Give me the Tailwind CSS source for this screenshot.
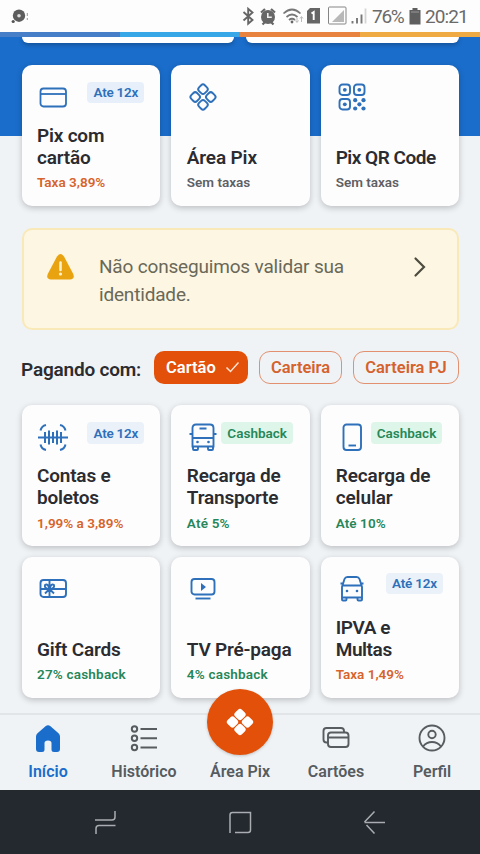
<!DOCTYPE html>
<html lang="pt-BR">
<head>
<meta charset="utf-8">
<title>Início</title>
<script src="https://cdn.jsdelivr.net/npm/@tailwindcss/browser@4"></script>
</head>
<body class="w-[480px] h-[854px] overflow-hidden bg-[#f0f3f6] font-['Roboto',sans-serif] text-[#2b2c31] flex flex-col">

<!-- Status bar -->
<header class="h-8 shrink-0 bg-[#fdfdfd] flex items-center text-[#6a6a6a] pl-2 pr-3">
  <svg class="w-6 h-6" viewBox="0 0 24 24"><circle cx="11" cy="11.700" r="6.200" fill="#5d5d5d"/><circle cx="11" cy="11.700" r="1.800" fill="#ddd"/><circle cx="5.200" cy="17.500" r="1.600" fill="#555"/><path d="M19.300 9v3M19.300 14v2" stroke="#999" stroke-width="1"/></svg>
  <div class="ml-auto flex items-center">
    <svg class="w-[130px] h-8" viewBox="240 0 130 32" fill="none">
      <path d="M242.500 12l9 8-4.300 3.700V8.800l4.300 3.700-9 8" stroke="#666" stroke-width="1.900"/>
      <circle cx="267" cy="17" r="7" fill="#666"/><path d="M260 12.500l4-3.500M274 12.500l-4-3.500M261.500 24.500l2.500-2.500M272.500 24.500l-2.500-2.500" stroke="#666" stroke-width="2.200"/><path d="M266.800 13v4.300h4" stroke="#eee" stroke-width="1.600"/>
      <path d="M282.500 13.500q8.500-8 17 0M285.500 17q5.500-5 11 0M288 20q3-2.500 6 0" stroke="#777" stroke-width="1.700"/><circle cx="291" cy="22" r="1.400" fill="#666"/><path d="M296 18v4m-1.500-1.500l1.500 2 1.500-2M300.500 22v-5m-1.500 1.500l1.500-2 1.500 2" stroke="#bbb" stroke-width="1"/>
      <path d="M309 8h10v15.500H306V11z" fill="#666"/><path d="M310.500 13.500l2.200-1.500v8" stroke="#fff" stroke-width="1.900"/>
      <rect x="327.500" y="7" width="17.500" height="17" rx="1" stroke="#858585"/><path d="M343 10v12h-12z" fill="#b8b8b8"/>
      <path d="M351.500 21v2.500M356 18v5.500M360.500 14.500v9" stroke="#777" stroke-width="1.900"/><path d="M364.500 8.500v15" stroke="#d5d5d5" stroke-width="1.800"/>
    </svg>
    <span class="w-[33px] ml-[1px] text-[19px] tracking-[-1.300px] leading-8 pt-[2px] whitespace-nowrap">76%</span>
    <svg class="w-3 h-[18px] ml-[4px]" viewBox="0 0 12 18"><path d="M3.500 1h5v2.500H3.500zM.5 3h11v14.500H.5z" fill="#5f5f5f"/><path d="M2 5h8" stroke="#999"/></svg>
    <span class="w-[43px] ml-[4px] text-[19px] tracking-[-0.900px] leading-8 pt-[2px] whitespace-nowrap">20:21</span>
  </div>
</header>

<div class="h-[5px] shrink-0 grid grid-cols-4">
  <span class="bg-[#467fc7]"></span><span class="bg-[#37a7e7]"></span><span class="bg-[#e8833f]"></span><span class="bg-[#efaa43]"></span>
</div>

<main class="h-[676px] shrink-0 overflow-hidden pl-[22px] pr-[21px] bg-[linear-gradient(#1a6dcb_0_99px,#f0f3f6_99px)]">
  <div class="flex gap-3">
    <div class="w-[212px] h-[6px] bg-white rounded-b-[10px] shadow-[0_2px_4px_rgba(0,0,0,0.25)]"></div>
    <div class="w-[213px] h-[6px] bg-white rounded-b-[10px] shadow-[0_2px_4px_rgba(0,0,0,0.25)]"></div>
  </div>

  <section class="mt-[22px] grid grid-cols-3 gap-[11px]">
    <article class="h-[141px] bg-[#fdfdfe] rounded-[10px] shadow-[0_2px_6px_rgba(0,0,0,0.22)] px-[15px] pt-4 pb-4 flex flex-col">
      <div class="flex justify-between items-start">
        <svg class="w-8 h-8" viewBox="0 0 32 32" fill="none" stroke="#2e70ba" stroke-width="1.800"><rect x="3.500" y="7.500" width="25.500" height="18" rx="3"/><path d="M3.500 13h25.500"/></svg>
        <span class="h-[21px] w-[57px] mr-px mt-px rounded bg-[#e7f0fa] text-center text-[#2e70ba] text-[13.500px] tracking-[-0.250px] font-semibold leading-[21px]">Ate 12x</span>
      </div>
      <h3 class="mt-auto text-[19px] leading-[22px] font-semibold tracking-[-0.200px]">Pix com<br>cartão</h3>
      <p class="mt-[5px] text-[13.500px] leading-4 font-semibold text-[#d7642b]">Taxa 3,89%</p>
    </article>
    <article class="h-[141px] bg-[#fdfdfe] rounded-[10px] shadow-[0_2px_6px_rgba(0,0,0,0.22)] px-[15.500px] pt-4 pb-4 flex flex-col">
      <svg class="w-8 h-8" viewBox="0 0 32 32" fill="none" stroke="#2e70ba" stroke-width="1.900"><g transform="rotate(45 16 16)"><rect x="6.400" y="6.400" width="8.200" height="8.200" rx="2.600"/><rect x="17.400" y="6.400" width="8.200" height="8.200" rx="2.600"/><rect x="6.400" y="17.400" width="8.200" height="8.200" rx="2.600"/><rect x="17.400" y="17.400" width="8.200" height="8.200" rx="2.600"/></g></svg>
      <h3 class="mt-auto text-[19px] leading-[22px] font-semibold tracking-[-0.150px]">Área Pix</h3>
      <p class="mt-[5px] text-[13.500px] leading-4 font-semibold text-[#5d6064]">Sem taxas</p>
    </article>
    <article class="h-[141px] bg-[#fdfdfe] rounded-[10px] shadow-[0_2px_6px_rgba(0,0,0,0.22)] px-[15px] pt-4 pb-4 flex flex-col">
      <svg class="w-8 h-8" viewBox="0 0 32 32" fill="none" stroke="#2e70ba" stroke-width="1.900"><rect x="3.500" y="3.500" width="10.500" height="10.500" rx="3"/><rect x="18" y="3.500" width="10.500" height="10.500" rx="3"/><rect x="3.500" y="18" width="10.500" height="10.500" rx="3"/><g fill="#2e70ba" stroke="none"><circle cx="8.800" cy="8.800" r="1.900"/><circle cx="23.300" cy="8.800" r="1.900"/><circle cx="8.800" cy="23.300" r="1.900"/><circle cx="19.200" cy="19.200" r="2.100"/><circle cx="27.500" cy="19.200" r="2.100"/><circle cx="23.400" cy="23.300" r="2.100"/><circle cx="19.200" cy="27.500" r="2.100"/><circle cx="27.500" cy="27.500" r="2.100"/></g></svg>
      <h3 class="mt-auto text-[19px] leading-[22px] font-semibold tracking-[-0.500px] whitespace-nowrap">Pix QR Code</h3>
      <p class="mt-[5px] text-[13.500px] leading-4 font-semibold text-[#5d6064]">Sem taxas</p>
    </article>
  </section>

  <section class="mt-[22px] h-[102px] rounded-[10px] border-2 border-[#fae9b8] bg-[#fcf6e2] flex items-start pl-[22px] pr-[28px] pt-[22px] text-[#6a6858]">
    <svg class="w-[29px] h-[28px] mt-[1px]" viewBox="0 0 29 28"><path d="M11 3.500q3.500-5 7 0l9 17q2.500 5.500-3 6H5q-5.500-.5-3-6z" fill="#eaa310"/><path d="M14.500 9.500v7.500" stroke="#fff3d0" stroke-width="2.500" stroke-linecap="round"/><circle cx="14.500" cy="21" r="1.600" fill="#fff3d0"/></svg>
    <p class="ml-[24px] mt-[1px] text-[19px] tracking-[-0.180px] leading-[27.500px] whitespace-nowrap">Não conseguimos validar sua<br>identidade.</p>
    <svg class="w-5 h-6 ml-auto mt-[2px]" viewBox="0 0 20 24" fill="none" stroke="#4d4c40" stroke-width="2.200" stroke-linecap="round"><path d="M6.500 4.500l8.500 8.500-8.500 8.500"/></svg>
  </section>

  <section class="mt-[21px] h-[33px] flex items-center">
    <h2 class="w-[132px] -ml-px mr-px pt-[6px] text-[19px] tracking-[-0.200px] font-semibold whitespace-nowrap">Pagando com:</h2>
    <span class="w-[94px] h-[33px] rounded-[10px] bg-[#e25009] text-white text-[16.500px] font-semibold leading-[33px] pl-3 ml-px flex shrink-0">Cartão<svg class="ml-[9px] mt-[9px] w-[14px] h-[14px]" viewBox="0 0 14 14" fill="none" stroke="#ffe4d5" stroke-width="1.500"><path d="M1.500 7.500l4 4 8-9"/></svg></span>
    <span class="ml-[11px] w-[83px] h-[33px] rounded-[11px] border border-[#e29170] text-[#d5622c] text-[16.500px] font-semibold leading-[31px] text-center shrink-0">Carteira</span>
    <span class="ml-[11px] w-[106px] h-[33px] rounded-[11px] border border-[#e29170] text-[#d5622c] text-[16.500px] font-semibold leading-[31px] text-center shrink-0">Carteira PJ</span>
  </section>

  <section class="mt-[21px] grid grid-cols-3 gap-[11px]">
    <article class="h-[141px] bg-[#fdfdfe] rounded-[10px] shadow-[0_2px_6px_rgba(0,0,0,0.22)] px-[15px] pt-4 pb-[15px] flex flex-col">
      <div class="flex justify-between items-start">
        <svg class="w-8 h-8" viewBox="0 0 32 32" fill="none" stroke="#2e70ba" stroke-width="2"><path d="M1 16.500h30M8 11v11M12 9.500v14M16 11v11M20 9.500v14M24 11v11"/><path d="M3.500 9.500q1-4.500 5.500-5.500M23 4q4.500 1 5.500 5.500M3.500 23.500q1 4.500 5.500 5.500M23 29q4.500-1 5.500-5.500"/></svg>
        <span class="h-[22px] w-[57px] mr-px mt-px rounded bg-[#ebf1f9] text-center text-[#2e70ba] text-[13.500px] tracking-[-0.250px] font-semibold leading-[22px]">Ate 12x</span>
      </div>
      <h3 class="mt-auto text-[19px] leading-[22px] font-semibold tracking-[-0.200px]">Contas e<br>boletos</h3>
      <p class="mt-[6px] text-[13.500px] leading-4 font-semibold text-[#d7642b] whitespace-nowrap">1,99% a 3,89%</p>
    </article>
    <article class="h-[141px] bg-[#fdfdfe] rounded-[10px] shadow-[0_2px_6px_rgba(0,0,0,0.22)] px-[15.500px] pt-4 pb-[15px] flex flex-col">
      <div class="flex justify-between items-start">
        <svg class="w-8 h-8" viewBox="0 0 32 32" fill="none" stroke="#2e70ba" stroke-width="1.900"><path d="M5.500 7q0-3.500 3.500-3.500h14q3.500 0 3.500 3.500v18.500h-21zM5.500 17h21M6 25v3q0 1 1 1h3q1 0 1-1v-2.500M21 25.500V28q0 1 1 1h3q1 0 1-1v-3M12.500 7.500h7M2.500 13h3M26.500 13h3"/><g fill="#2e70ba" stroke="none"><circle cx="10.500" cy="21" r="1.300"/><circle cx="21.500" cy="21" r="1.300"/></g></svg>
        <span class="h-[22px] w-[72px] mr-px mt-px rounded bg-[#def6ea] text-center text-[#268758] text-[13.500px] font-semibold leading-[22px]">Cashback</span>
      </div>
      <h3 class="mt-auto text-[19px] leading-[22px] font-semibold tracking-[-0.200px]">Recarga de<br>Transporte</h3>
      <p class="mt-[6px] text-[13.500px] leading-4 font-semibold tracking-[0.200px] text-[#268758]">Até 5%</p>
    </article>
    <article class="h-[141px] bg-[#fdfdfe] rounded-[10px] shadow-[0_2px_6px_rgba(0,0,0,0.22)] px-[15px] pt-4 pb-[15px] flex flex-col">
      <div class="flex justify-between items-start">
        <svg class="w-8 h-8" viewBox="0 0 32 32" fill="none" stroke="#2e70ba" stroke-width="1.900"><rect x="7.500" y="3.500" width="17.500" height="25.500" rx="3"/><path d="M12.500 24.500h7.500"/></svg>
        <span class="h-[22px] w-[71px] mr-[2px] mt-px rounded bg-[#def6ea] text-center text-[#268758] text-[13.500px] font-semibold leading-[22px]">Cashback</span>
      </div>
      <h3 class="mt-auto text-[19px] leading-[22px] font-semibold tracking-[-0.100px]">Recarga de<br>celular</h3>
      <p class="mt-[6px] text-[13.500px] leading-4 font-semibold tracking-[0.100px] text-[#268758]">Até 10%</p>
    </article>

    <article class="h-[141px] bg-[#fdfdfe] rounded-[10px] shadow-[0_2px_6px_rgba(0,0,0,0.22)] px-[15px] pt-[15px] pb-4 flex flex-col">
      <svg class="w-8 h-8" viewBox="0 0 32 32" fill="none" stroke="#2e70ba" stroke-width="1.900"><rect x="3.500" y="8" width="25.500" height="17" rx="3"/><path d="M3.500 17h25.500M12.500 8v17M12.500 17q-5.500-.5-4.500-4 3-2 4.500 4 1.500-6 4.500-4 1 3.500-4.500 4l-4.500 4.500M12.500 17l4.500 4.500"/></svg>
      <h3 class="mt-auto text-[19px] leading-[22px] font-semibold tracking-[-0.200px]">Gift Cards</h3>
      <p class="mt-[5px] text-[13.500px] leading-4 font-semibold tracking-[0.200px] text-[#268758] whitespace-nowrap">27% cashback</p>
    </article>
    <article class="h-[141px] bg-[#fdfdfe] rounded-[10px] shadow-[0_2px_6px_rgba(0,0,0,0.22)] px-[15.500px] pt-[15px] pb-4 flex flex-col">
      <svg class="w-8 h-8" viewBox="0 0 32 32" fill="none" stroke="#2e70ba" stroke-width="1.900"><rect x="4.500" y="7" width="23" height="15.500" rx="3"/><path d="M8.500 26.500h15"/><path d="M14 11v8l5-4z" fill="#2e70ba" stroke="none"/></svg>
      <h3 class="mt-auto text-[19px] leading-[22px] font-semibold tracking-[-0.200px] whitespace-nowrap">TV Pré-paga</h3>
      <p class="mt-[5px] text-[13.500px] leading-4 font-semibold tracking-[0.200px] text-[#268758] whitespace-nowrap">4% cashback</p>
    </article>
    <article class="h-[141px] bg-[#fdfdfe] rounded-[10px] shadow-[0_2px_6px_rgba(0,0,0,0.22)] px-[15px] pt-[15px] pb-4 flex flex-col">
      <div class="flex justify-between items-start">
        <svg class="w-8 h-8" viewBox="0 0 32 32" fill="none" stroke="#2e70ba" stroke-width="1.900"><path d="M6 25.500V15l2.500-8q.8-2 3-2h9q2.200 0 3 2l2.500 8v10.500zM6 13.500h20M6 25v2.500q0 1 1 1h2.500q1 0 1-1V25M21.500 25v2.500q0 1 1 1H25q1 0 1-1V25M4.500 11.500H7M25 11.500h2.500"/><g fill="#2e70ba" stroke="none"><circle cx="11" cy="19" r="1.300"/><circle cx="21" cy="19" r="1.300"/></g></svg>
        <span class="h-[21px] w-[57px] mr-px mt-px rounded bg-[#ebf1f9] text-center text-[#2e70ba] text-[13.500px] tracking-[-0.200px] font-semibold leading-[21px]">Até 12x</span>
      </div>
      <h3 class="mt-auto text-[19px] leading-[22px] font-semibold tracking-[-0.400px]">IPVA e<br>Multas</h3>
      <p class="mt-[5px] text-[13.500px] leading-4 font-semibold text-[#d7642b]">Taxa 1,49%</p>
    </article>
  </section>
</main>

<!-- Tab bar -->
<nav class="relative h-[77px] shrink-0 border-t-2 border-[#e2e5e8] bg-[#f0f3f6] grid grid-cols-5 text-[#565c5f] text-[16px] font-semibold text-center">
  <a class="flex flex-col items-center pt-[7px] text-[#1b6dcb]"><svg class="w-8 h-8" viewBox="0 0 32 32"><path d="M4 14.500q0-2 1.500-3.300l8-7q2.500-2 5 0l8 7Q28 12.500 28 14.500V27q0 3-3 3h-3q-2.500 0-2.500-2.500V21q0-2.500-3.500-2.500T12.500 21v6.500Q12.500 30 10 30H7q-3 0-3-3z" fill="#1b6dcb"/></svg><span class="leading-5 mt-[8px]">Início</span></a>
  <a class="flex flex-col items-center pt-[7px]"><svg class="w-8 h-8" viewBox="0 0 32 32" fill="none" stroke="#565c5f" stroke-width="2"><circle cx="6.500" cy="7" r="2.700"/><circle cx="6.500" cy="16.200" r="2.700"/><circle cx="6.500" cy="25.500" r="2.700"/><path d="M12.500 7H29M12.500 16.200H29M12.500 25.500H29"/></svg><span class="leading-5 mt-[8px]">Histórico</span></a>
  <a class="flex flex-col items-center pt-[47px]"><span class="leading-5 whitespace-nowrap">Área Pix</span></a>
  <a class="flex flex-col items-center pt-[7px]"><svg class="w-8 h-8" viewBox="0 0 32 32" fill="none" stroke="#565c5f" stroke-width="1.900"><rect x="8" y="10.500" width="20.500" height="14.500" rx="3"/><path d="M8 15.500h20.500M8 20.500H6.500q-3 0-3-3V9q0-3 3-3h14.500q3 0 3 3v1.500"/></svg><span class="leading-5 mt-[8px]">Cartões</span></a>
  <a class="flex flex-col items-center pt-[7px]"><svg class="w-8 h-8" viewBox="0 0 32 32" fill="none" stroke="#565c5f" stroke-width="1.900"><circle cx="16" cy="16" r="12.500"/><circle cx="16" cy="12.500" r="3.700"/><path d="M7 24.500q3.500-4.500 9-4.500t9 4.500"/></svg><span class="leading-5 mt-[8px]">Perfil</span></a>
  <div class="absolute left-[207px] top-[-26px] w-[66px] h-[66px] rounded-full bg-[#e25009] shadow-[0_1px_3px_rgba(0,0,0,0.2)] flex items-center justify-center">
    <svg class="w-8 h-8" viewBox="0 0 32 32" fill="#fff"><g transform="rotate(45 16 16)"><rect x="5.900" y="5.900" width="9.600" height="9.600" rx="2.800"/><rect x="16.500" y="5.900" width="9.600" height="9.600" rx="2.800"/><rect x="5.900" y="16.500" width="9.600" height="9.600" rx="2.800"/><rect x="16.500" y="16.500" width="9.600" height="9.600" rx="2.800"/></g></svg>
  </div>
</nav>

<!-- System navigation -->
<footer class="h-16 shrink-0 bg-[#24292f] flex items-center justify-between pl-[93px] pr-[94px]">
  <svg class="w-6 h-6" viewBox="0 0 24 24" fill="none" stroke="#a9adb1" stroke-width="1.500"><path d="M2 10h17q3 0 3-3V1M22.500 15.500H6q-3 0-3 3V25"/></svg>
  <svg class="w-6 h-6" viewBox="0 0 24 24" fill="none" stroke="#a9adb1" stroke-width="1.500"><path d="M2 23V5q0-2.500 2.500-2.500H22.500V20q0 2.500-2.500 2.500H7"/></svg>
  <svg class="w-6 h-6" viewBox="0 0 24 24" fill="none" stroke="#a9adb1" stroke-width="1.500"><path d="M12.500 1.500L2.500 12M4.500 15l8 8.500M2.500 12.500H23"/></svg>
</footer>
</body>
</html>
